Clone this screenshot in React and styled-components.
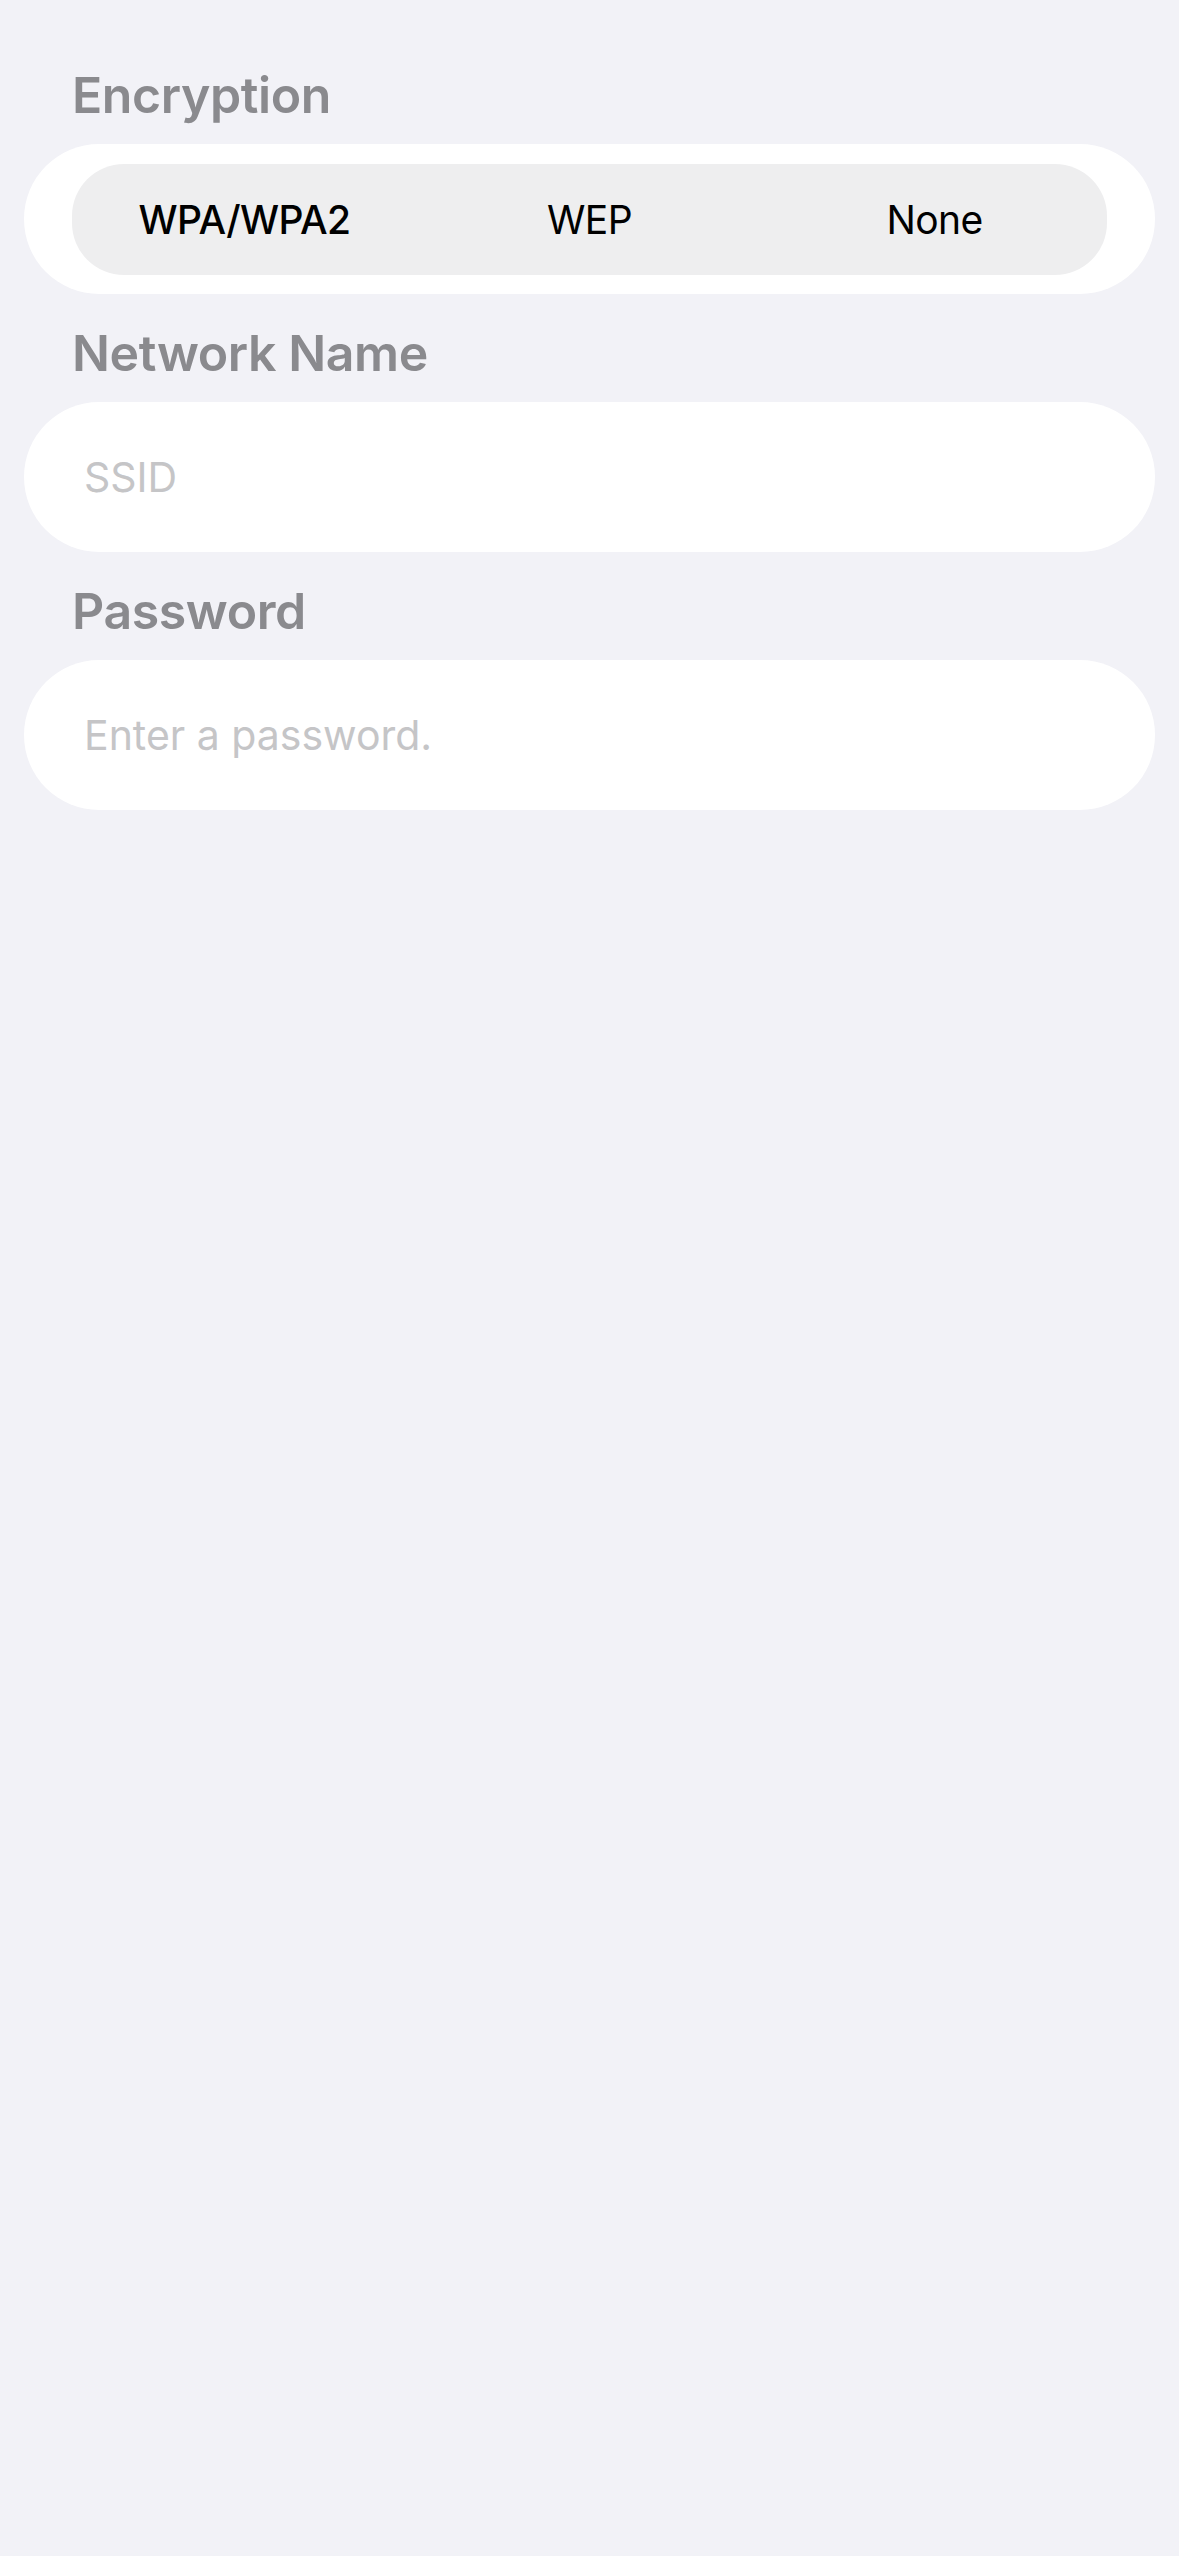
import { useState } from "react";
import styled, { createGlobalStyle } from "styled-components";

const GlobalStyle = createGlobalStyle`
  html, body {
    margin: 0;
    padding: 0;
    background: #f2f2f7;
  }
  body {
    font-family: Inter, "Noto Sans", "Liberation Sans", sans-serif;
    -webkit-font-smoothing: antialiased;
  }
`;

const options = ["WPA/WPA2", "WEP", "None"];

function App() {
  const [encryption, setEncryption] = useState("WPA/WPA2");

  return (
    <>
      <GlobalStyle />
      <Page>
        <Section>
          <Label>Encryption</Label>
          <Card>
            <Segmented>
              {options.map((o) => (
                <Segment
                  key={o}
                  $active={o === encryption}
                  onClick={() => setEncryption(o)}
                >
                  {o}
                </Segment>
              ))}
            </Segmented>
          </Card>
        </Section>
        <Section>
          <Label>Network Name</Label>
          <Card>
            <Field placeholder="SSID" />
          </Card>
        </Section>
        <Section>
          <Label>Password</Label>
          <Card>
            <Field type="password" placeholder="Enter a password." />
          </Card>
        </Section>
      </Page>
    </>
  );
}

export default App;

const Page = styled.div`
  min-height: 2556px;
  box-sizing: border-box;
  padding: 65px 24px 0;
  display: flex;
  flex-direction: column;
  gap: 29px;
  background: #f2f2f7;
`;

const Section = styled.div`
  display: flex;
  flex-direction: column;
  gap: 19px;
`;

const Label = styled.div`
  padding-left: 48px;
  font-size: 50px;
  line-height: 60px;
  font-weight: 600;
  letter-spacing: -0.4px;
  color: #8a8a8e;
`;

const Card = styled.div`
  height: 150px;
  box-sizing: border-box;
  border-radius: 75px;
  background: #ffffff;
  display: flex;
  align-items: center;
`;

const Segmented = styled.div`
  flex: 1;
  margin: 0 48px;
  height: 111px;
  border-radius: 52px;
  background: #eeeeef;
  display: grid;
  grid-template-columns: repeat(3, 1fr);
  align-items: center;
`;

const Segment = styled.div`
  text-align: center;
  font-size: 39px;
  letter-spacing: -0.6px;
  font-weight: ${({ $active }) => ($active ? 500 : 400)};
  color: #000;
  cursor: pointer;
`;

const Field = styled.input`
  flex: 1;
  height: 100%;
  border: none;
  outline: none;
  background: transparent;
  padding: 0 60px;
  font-family: inherit;
  font-size: 41px;
  color: #000;

  &::placeholder {
    color: #c5c5c7;
  }
`;
